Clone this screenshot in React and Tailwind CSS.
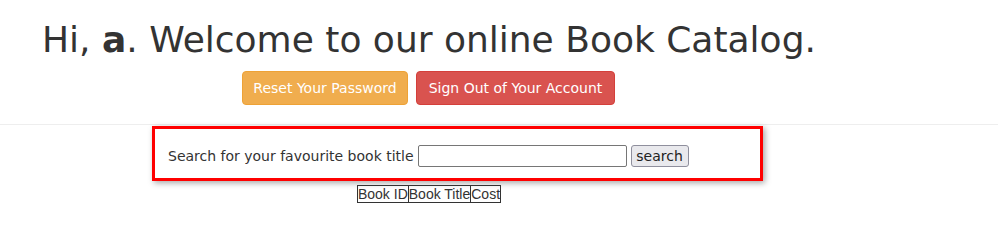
const App = () => {
    return (
        <div className="w-[998px] h-[252px] bg-white text-[#333] font-['DejaVu_Sans',sans-serif]">
            <div className="pt-5 pl-[42px]">
                <h1 className="text-[36px] leading-[40px] font-normal">
                    Hi, <b className="font-bold">a</b>. Welcome to our online Book Catalog.
                </h1>
            </div>

            {/* account buttons */}
            <div className="w-[857px] mt-[11px] flex justify-center gap-2">
                <button className="w-[166px] h-[34px] text-[14px] text-white bg-[#f0ad4e] border border-[#eea236] rounded-[4px]">
                    Reset Your Password
                </button>
                <button className="w-[199px] h-[34px] text-[14px] text-white bg-[#d9534f] border border-[#d43f3a] rounded-[4px]">
                    Sign Out of Your Account
                </button>
            </div>

            <hr className="mt-[19px] border-t border-[#eee]" />

            {/* search box */}
            <div className="ml-[152px] mt-[1px] w-[611px] h-[55px] border-[3px] border-[#ff0000] shadow-[2px_2px_6px_rgba(0,0,0,0.35)] pt-4 pl-[13px]">
                <div className="flex items-center h-[22px] text-[14px]">
                    <span>Search for your favourite book title</span>
                    <input type="text" className="ml-1 w-[209px] h-[22px] border border-[#767676] rounded-[2px] bg-white" />
                    <button className="ml-1 w-[58px] h-[22px] text-[14px] text-[#222] bg-[#e9e9ed] border border-[#8f8f9d] rounded-[3px] leading-none">
                        search
                    </button>
                </div>
            </div>

            <div className="w-[858px] mt-1 flex justify-center">
                <table className="font-['Liberation_Sans',Arial,sans-serif] text-[14px] leading-4 text-[#333]">
                    <thead>
                        <tr>
                            <th className="font-normal border border-[#333] p-0">Book ID</th>
                            <th className="font-normal border border-[#333] p-0">Book Title</th>
                            <th className="font-normal border border-[#333] p-0">Cost</th>
                        </tr>
                    </thead>
                </table>
            </div>
        </div>
    );
};

export default App;
